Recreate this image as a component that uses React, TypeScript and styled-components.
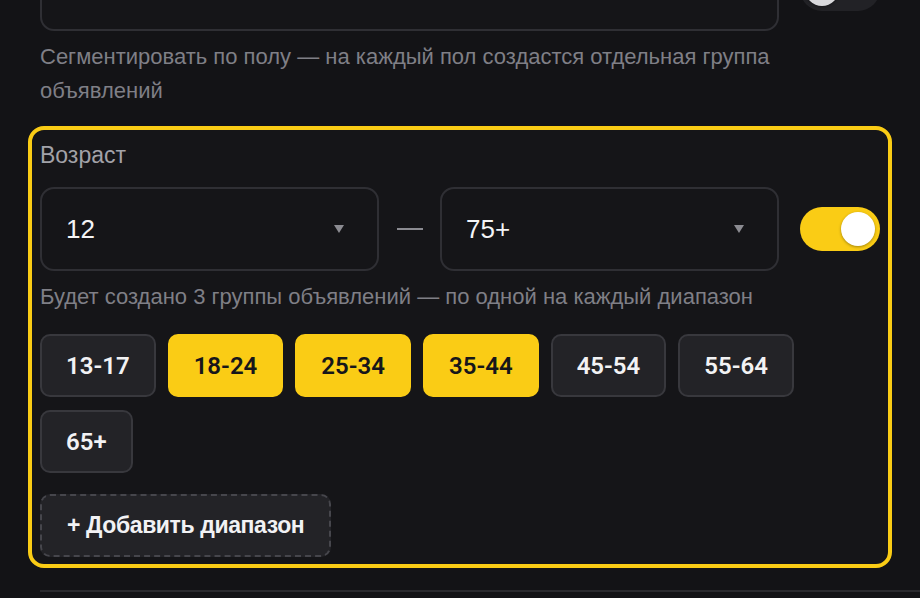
import React, { useState } from "react";
import styled, { createGlobalStyle } from "styled-components";

const Global = createGlobalStyle`
  html, body {
    margin: 0;
    padding: 0;
    background: #131316;
    overflow: hidden;
  }
  body {
    font-family: "Liberation Sans", Arial, sans-serif;
    color: #f2f2f4;
  }
`;

const Page = styled.div`
  width: 920px;
  height: 598px;
  box-sizing: border-box;
  padding: 0 40px;
  overflow: hidden;
`;

const Scroller = styled.div`
  margin-top: -53px;
  display: flex;
  flex-direction: column;
`;

const FieldRow = styled.div`
  display: flex;
  align-items: center;
  gap: 21px;
`;

const Selects = styled.div`
  flex: 1;
  display: flex;
  align-items: center;
`;

const SelectBox = styled.div`
  flex: 1;
  height: 84px;
  box-sizing: border-box;
  border: 2px solid #2f2f34;
  border-radius: 14px;
  background: #151518;
  display: flex;
  align-items: center;
  justify-content: space-between;
  padding: 0 33px 0 24px;
  font-size: 26px;
  color: #f4f4f6;
`;

const Caret = styled.span`
  width: 0;
  height: 0;
  border-left: 5px solid transparent;
  border-right: 5px solid transparent;
  border-top: 8px solid #8b8b91;
`;

const Dash = styled.span`
  width: 61px;
  display: flex;
  justify-content: center;
  &::before {
    content: "";
    width: 26px;
    height: 2px;
    background: #8b8b91;
  }
`;

const Toggle = styled.button<{ $on: boolean }>`
  width: 80px;
  height: 44px;
  flex: none;
  border: none;
  border-radius: 22px;
  padding: 0 5px;
  display: flex;
  align-items: center;
  justify-content: ${(p) => (p.$on ? "flex-end" : "flex-start")};
  background: ${(p) => (p.$on ? "#facc15" : "#222226")};
  cursor: pointer;
  &::after {
    content: "";
    width: 34px;
    height: 34px;
    border-radius: 50%;
    background: ${(p) => (p.$on ? "#ffffff" : "#d9d9dc")};
    box-shadow: 0 1px 3px rgba(0, 0, 0, 0.35);
  }
`;

const Hint = styled.p`
  margin: 9px 0 0;
  font-size: 22px;
  line-height: 34px;
  color: #7f7f86;
`;

const Card = styled.section`
  margin: 18px -12px 0;
  border: 4px solid #facc15;
  border-radius: 16px;
  padding: 8px 8px 7px;
  background: #151518;
  display: flex;
  flex-direction: column;
`;

const Label = styled.div`
  font-size: 23px;
  line-height: 34px;
  color: #a2a2a8;
  margin-bottom: 15px;
`;

const Chips = styled.div`
  margin-top: 20px;
  display: flex;
  flex-wrap: wrap;
  gap: 13px 12px;
  max-width: 780px;
`;

const Chip = styled.button<{ $active: boolean }>`
  height: 63px;
  padding: 0 24px;
  box-sizing: border-box;
  border-radius: 10px;
  border: 2px solid ${(p) => (p.$active ? "#facc15" : "#38383d")};
  background: ${(p) => (p.$active ? "#facc15" : "#232327")};
  color: ${(p) => (p.$active ? "#16161a" : "#f2f2f4")};
  font-family: Roboto, "Liberation Sans", sans-serif;
  font-weight: 600;
  font-size: 24px;
  cursor: pointer;
`;

const AddButton = styled.button`
  margin-top: 21px;
  align-self: flex-start;
  height: 63px;
  padding: 0 25px;
  box-sizing: border-box;
  border-radius: 10px;
  border: 2px dashed #46464c;
  background: #232327;
  color: #f2f2f4;
  font-family: "Liberation Sans", Arial, sans-serif;
  font-weight: 700;
  font-size: 23px;
  letter-spacing: -0.4px;
  cursor: pointer;
`;

const Divider = styled.hr`
  margin: 22px -40px 0 0;
  border: none;
  height: 2px;
  background: #2a2a2e;
`;

const ranges = ["13-17", "18-24", "25-34", "35-44", "45-54", "55-64", "65+"];

export default function App() {
  const [selected, setSelected] = useState<string[]>(["18-24", "25-34", "35-44"]);
  const [ageOn, setAgeOn] = useState(true);

  const toggleRange = (r: string) =>
    setSelected((s) => (s.includes(r) ? s.filter((x) => x !== r) : [...s, r]));

  return (
    <Page>
      <Global />
      <Scroller>
        <FieldRow>
          <Selects>
            <SelectBox />
          </Selects>
          <Toggle $on={false} aria-label="Пол" />
        </FieldRow>
        <Hint>
          Сегментировать по полу — на каждый пол создастся отдельная группа объявлений
        </Hint>

        <Card>
          <Label>Возраст</Label>
          <FieldRow>
            <Selects>
              <SelectBox>
                12
                <Caret />
              </SelectBox>
              <Dash />
              <SelectBox>
                75+
                <Caret />
              </SelectBox>
            </Selects>
            <Toggle $on={ageOn} onClick={() => setAgeOn(!ageOn)} aria-label="Возраст" />
          </FieldRow>
          <Hint>
            Будет создано {selected.length} группы объявлений — по одной на каждый диапазон
          </Hint>
          <Chips>
            {ranges.map((r) => (
              <Chip key={r} $active={selected.includes(r)} onClick={() => toggleRange(r)}>
                {r}
              </Chip>
            ))}
          </Chips>
          <AddButton>+ Добавить диапазон</AddButton>
        </Card>
        <Divider />
      </Scroller>
    </Page>
  );
}
